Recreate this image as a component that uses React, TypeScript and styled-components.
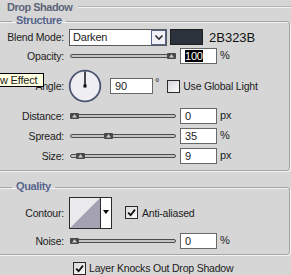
import styled, { createGlobalStyle } from "styled-components";

const GlobalStyle = createGlobalStyle`
  html, body {
    margin: 0;
    padding: 0;
    background: #d6d6d6;
  }
  body {
    font-family: "Liberation Sans", Arial, sans-serif;
    font-size: 10.5px;
    letter-spacing: -0.2px;
    color: #1c1c1c;
  }
`;

const sliders = [
  { label: "Distance:", value: "0", unit: "px", pos: 0 },
  { label: "Spread:", value: "35", unit: "%", pos: 0.35 },
  { label: "Size:", value: "9", unit: "px", pos: 0.06 },
];

export default function App() {
  return (
    <Panel>
      <GlobalStyle />
      <Header>
        <HeaderTitle>Drop Shadow</HeaderTitle>
        <Rule />
      </Header>

      <Group $top={0} $bottom={4}>
        <Legend>Structure</Legend>
        <Row $h={18}>
          <Label>Blend Mode:</Label>
          <Select>
            <SelectText>Darken</SelectText>
            <SelectButton>
              <svg width="10" height="7" viewBox="0 0 10 7">
                <path d="M1.5 1.5 L5 5 L8.5 1.5" fill="none" stroke="#2c2c3c" strokeWidth="1.6" />
              </svg>
            </SelectButton>
          </Select>
          <Swatch />
          <HexText>2B323B</HexText>
        </Row>
        <Row $h={20}>
          <Label>Opacity:</Label>
          <Slider pos={1} />
          <Field $ml={4} $w={37}>
            <Selected>100</Selected>
          </Field>
          <Unit>%</Unit>
        </Row>
        <Row $h={40}>
          <Label>Angle:</Label>
          <Dial width="34" height="34" viewBox="0 0 34 34">
            <circle cx="17" cy="17" r="15.3" fill="#efeff3" stroke="#4b5572" strokeWidth="1.8" />
            <line x1="17" y1="17" x2="17" y2="2.5" stroke="#000" strokeWidth="1.4" />
            <rect x="15.5" y="15.5" width="3" height="3" fill="#000" />
          </Dial>
          <Field $ml={8} $w={43}>90</Field>
          <Unit $ml={2}>°</Unit>
          <Check $ml={8} />
          <CheckText $ml={3}>Use Global Light</CheckText>
          <Tooltip>w Effect</Tooltip>
        </Row>
        {sliders.map((s) => (
          <Row key={s.label} $h={20}>
            <Label>{s.label}</Label>
            <Slider pos={s.pos} />
            <Field $ml={4} $w={37}>{s.value}</Field>
            <Unit>{s.unit}</Unit>
          </Row>
        ))}
      </Group>

      <Group $top={9} $bottom={3}>
        <Legend>Quality</Legend>
        <Row $h={37}>
          <Label>Contour:</Label>
          <Contour>
            <ContourPreview>
              <svg width="30" height="30" viewBox="0 0 30 30">
                <rect width="30" height="30" fill="#ebebef" />
                <polygon points="0,30 30,0 30,30" fill="#a5a3b3" />
              </svg>
            </ContourPreview>
            <ContourArrow>
              <svg width="6" height="4" viewBox="0 0 6 4">
                <polygon points="0,0 6,0 3,4" fill="#000" />
              </svg>
            </ContourArrow>
          </Contour>
          <Check $ml={13} checked />
          <CheckText $ml={4}>Anti-aliased</CheckText>
        </Row>
        <Row $h={20}>
          <Label>Noise:</Label>
          <Slider pos={0} />
          <Field $ml={4} $w={37}>0</Field>
          <Unit>%</Unit>
        </Row>
      </Group>

      <Footer>
        <Check checked />
        <CheckText $ml={3}>Layer Knocks Out Drop Shadow</CheckText>
      </Footer>
    </Panel>
  );
}

function Slider({ pos }: { pos: number }) {
  return (
    <SliderBox>
      <Track />
      <Thumb style={{ left: `${pos * 97}px` }}>
        <svg width="9" height="6" viewBox="0 0 9 6">
          <rect width="9" height="6" rx="1" fill="#4a4a4a" />
          <polygon points="4.5,1.2 7,4.6 2,4.6" fill="#cfcfcf" />
        </svg>
      </Thumb>
    </SliderBox>
  );
}

function Check({ checked, $ml = 0 }: { checked?: boolean; $ml?: number }) {
  return (
    <CheckBox $ml={$ml}>
      {checked && (
        <svg width="11" height="11" viewBox="0 0 11 11">
          <path d="M2.2 5.6 L4.6 8.2 L9 2.6" fill="none" stroke="#111" strokeWidth="1.8" />
        </svg>
      )}
    </CheckBox>
  );
}

const Panel = styled.div`
  width: 291px;
  height: 275px;
  overflow: hidden;
`;

const Header = styled.div`
  display: flex;
  align-items: center;
  height: 14px;
  padding-left: 7px;
  padding-bottom: 1px;
  box-sizing: border-box;
`;

const HeaderTitle = styled.span`
  font-size: 11px;
  font-weight: bold;
  letter-spacing: -0.5px;
  color: #5d6579;
`;

const Rule = styled.div`
  flex: 1;
  margin-left: 6px;
  border-top: 1px solid #b4b4b4;
  border-bottom: 1px solid #f0f0f0;
`;

const Group = styled.fieldset<{ $top: number; $bottom: number }>`
  margin: ${(p) => p.$top}px 1px 0 -2px;
  padding: 0 0 ${(p) => p.$bottom}px;
  min-width: 0;
  border: 1px solid #a4a4a4;
  border-radius: 3px;
  box-shadow: inset 1px 1px 0 #f3f3f3, 1px 1px 0 #f3f3f3;
`;

const Legend = styled.legend`
  margin-left: 13px;
  padding: 0 4px 2px;
  font-size: 11px;
  font-weight: bold;
  line-height: 12px;
  letter-spacing: -0.35px;
  color: #56638a;
`;

const Row = styled.div<{ $h: number }>`
  position: relative;
  display: flex;
  align-items: center;
  height: ${(p) => p.$h}px;
`;

const Label = styled.span`
  flex: none;
  width: 65px;
  text-align: right;
  white-space: nowrap;
`;

const Select = styled.div`
  display: flex;
  width: 98px;
  height: 17px;
  margin-left: 5px;
  box-sizing: border-box;
  border: 1px solid #5a5a5a;
  background: #fff;
`;

const SelectText = styled.span`
  flex: 1;
  padding-left: 3px;
  font-size: 11px;
  line-height: 15px;
`;

const SelectButton = styled.span`
  display: flex;
  align-items: center;
  justify-content: center;
  width: 13px;
  margin: 0;
  border: 1px solid #56638c;
  background: #f2f2f6;
`;

const Swatch = styled.div`
  width: 33px;
  height: 16px;
  margin-left: 3px;
  box-sizing: border-box;
  border: 1px solid #1e1e1e;
  background: #2b323b;
`;

const HexText = styled.span`
  margin-left: 6px;
  font-size: 13px;
  letter-spacing: 0;
  color: #111;
`;

const SliderBox = styled.div`
  position: relative;
  display: flex;
  align-items: center;
  width: 106px;
  height: 9px;
  margin-left: 6px;
`;

const Track = styled.div`
  width: 100%;
  height: 4px;
  box-sizing: border-box;
  border: 1px solid #4d4d4d;
  border-radius: 3px;
  background: #c4c4c4;
`;

const Thumb = styled.div`
  position: absolute;
  top: 1px;
  display: flex;
`;

const Field = styled.div<{ $ml: number; $w: number }>`
  width: ${(p) => p.$w}px;
  height: 16px;
  margin-left: ${(p) => p.$ml}px;
  padding-left: 4px;
  box-sizing: border-box;
  border: 1px solid #686868;
  background: #fff;
  font-size: 11px;
  line-height: 14px;
`;

const Selected = styled.span`
  background: #000;
  color: #fff;
`;

const Unit = styled.span<{ $ml?: number }>`
  margin-left: ${(p) => p.$ml ?? 3}px;
  align-self: flex-start;
  padding-top: ${(p) => (p.$ml ? 10 : 3)}px;
  font-size: 11px;
`;

const Dial = styled.svg`
  margin-left: 4px;
`;

const CheckBox = styled.span<{ $ml: number }>`
  display: flex;
  align-items: center;
  justify-content: center;
  width: 13px;
  height: 13px;
  margin-left: ${(p) => p.$ml}px;
  box-sizing: border-box;
  border: 1px solid #2a2a2a;
  background: linear-gradient(135deg, #d8d8dc, #fafafa);
`;

const CheckText = styled.span<{ $ml: number }>`
  margin-left: ${(p) => p.$ml}px;
  white-space: nowrap;
`;

const Tooltip = styled.div`
  position: absolute;
  left: -3px;
  top: 7px;
  height: 14px;
  padding: 0 6px 0 3px;
  box-sizing: border-box;
  border: 1px solid #000;
  background: #ffffe1;
  font-size: 11px;
  line-height: 12px;
  white-space: nowrap;
`;

const Contour = styled.div`
  display: flex;
  height: 32px;
  margin-left: 5px;
  box-sizing: border-box;
  border: 1px solid #2b2b2b;
`;

const ContourPreview = styled.div`
  display: flex;
  border-right: 1px solid #2b2b2b;
`;

const ContourArrow = styled.div`
  display: flex;
  justify-content: center;
  width: 10px;
  padding-top: 12px;
  box-sizing: border-box;
  background: #fff;
`;

const Footer = styled.div`
  display: flex;
  align-items: center;
  height: 18px;
  margin-top: 4px;
  padding-left: 73px;
`;
